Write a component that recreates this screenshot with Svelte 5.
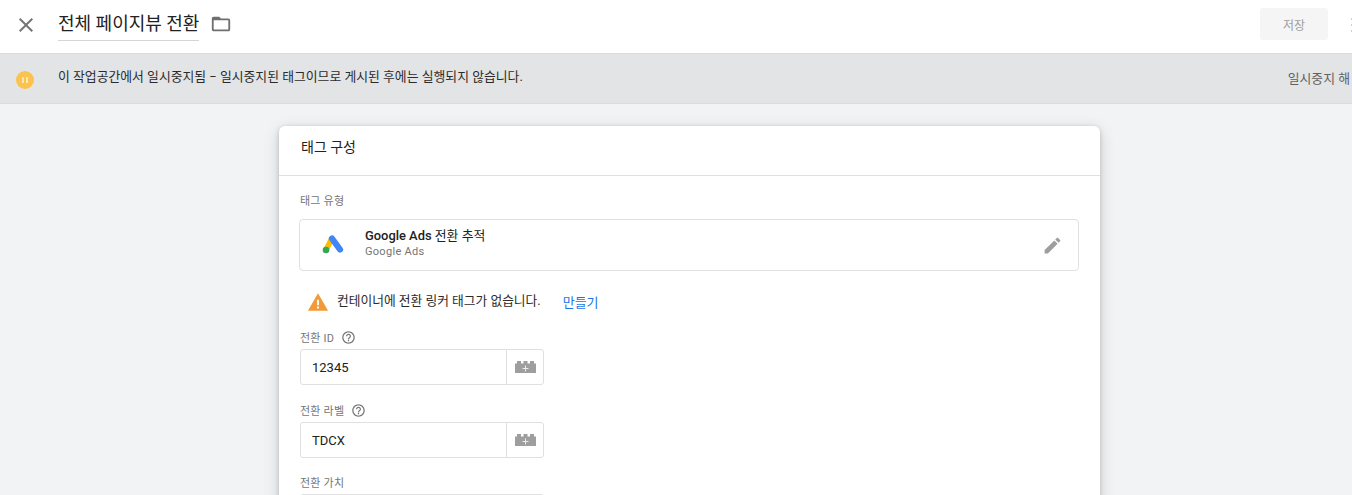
<script>
  const fields = [
    { label: '전환 ID', value: '12345', help: true },
    { label: '전환 라벨', value: 'TDCX', help: true },
    { label: '전환 가치', value: '', help: false }
  ];
</script>

<div class="page">
  <header class="topbar">
    <button class="close" aria-label="닫기">
      <svg width="24" height="24" viewBox="0 0 24 24"><path fill="#757575" d="M19 6.41 17.59 5 12 10.59 6.41 5 5 6.41 10.59 12 5 17.59 6.41 19 12 13.41 17.59 19 19 17.59 13.41 12z"/></svg>
    </button>
    <h1 class="title">전체 페이지뷰 전환</h1>
    <svg class="folder" width="22" height="22" viewBox="0 0 24 24"><path fill="#6f6f6f" d="M20 6h-8l-2-2H4c-1.100 0-2 .9-2 2v12c0 1.100.9 2 2 2h16c1.100 0 2-.9 2-2V8c0-1.100-.9-2-2-2zm0 12H4V8h16v10z"/></svg>
    <div class="spacer"></div>
    <button class="save">저장</button>
    <span class="more"><i></i><i></i><i></i></span>
  </header>

  <div class="notice">
    <span class="pause">
      <i></i><i></i>
    </span>
    <span class="notice-text">이 작업공간에서 일시중지됨 − 일시중지된 태그이므로 게시된 후에는 실행되지 않습니다.</span>
    <span class="unpause">일시중지 해</span>
  </div>

  <main class="content">
    <section class="card">
      <div class="card-title">태그 구성</div>
      <div class="card-body">
        <div class="small-label">태그 유형</div>
        <div class="type-box">
          <svg class="ads-logo" width="24" height="24" viewBox="0 0 24 24">
            <path d="M10.500 6 5.500 16" stroke="#fbbc04" stroke-width="5.500" stroke-linecap="round" fill="none"/>
            <path d="M11 5.500 19 16.500" stroke="#4285f4" stroke-width="6.200" stroke-linecap="round" fill="none"/>
            <circle cx="5" cy="17" r="3.300" fill="#34a853"/>
          </svg>
          <div class="type-text">
            <div class="type-name"><b>Google Ads</b> 전환 추적</div>
            <div class="type-sub">Google Ads</div>
          </div>
          <svg class="pencil" width="21" height="21" viewBox="0 0 24 24"><path fill="#9e9e9e" d="M3 17.250V21h3.750L17.810 9.940l-3.750-3.750L3 17.250zM20.710 7.040a1 1 0 0 0 0-1.410l-2.340-2.340a1 1 0 0 0-1.410 0l-1.830 1.830 3.750 3.750 1.830-1.830z"/></svg>
        </div>

        <div class="warning">
          <svg width="22" height="22" viewBox="0 0 24 24"><path fill="#f29a38" d="M1 21.500h22L12 2.500z"/><path fill="#fff" d="M11 9.500h2v6h-2zM11 17h2v2h-2z"/></svg>
          <span class="warning-text">컨테이너에 전환 링커 태그가 없습니다.</span>
          <a class="create" href="#create">만들기</a>
        </div>

        {#each fields as field}
          <div class="field">
            <div class="field-label">
              {field.label}
              {#if field.help}
                <svg width="15" height="15" viewBox="0 0 24 24"><path fill="#757575" d="M11 18h2v-2h-2v2zm1-16C6.480 2 2 6.480 2 12s4.480 10 10 10 10-4.480 10-10S17.520 2 12 2zm0 18c-4.410 0-8-3.590-8-8s3.590-8 8-8 8 3.590 8 8-3.590 8-8 8zm0-14c-2.210 0-4 1.790-4 4h2c0-1.100.9-2 2-2s2 .9 2 2c0 2-3 1.750-3 5h2c0-2.250 3-2.500 3-5 0-2.210-1.790-4-4-4z"/></svg>
              {/if}
            </div>
            <div class="input">
              <span class="value">{field.value}</span>
              <span class="var-btn">
                <svg width="21" height="12" viewBox="0 0 21 12"><path fill="#9e9e9e" d="M0 2.500h2V0h4v2.500h2.500V0h4v2.500H15V0h4v2.500h2V12H0z"/><path fill="#ececec" d="M10 4.500h1v2.500h2.500v1H11v2.500h-1V8H7.500V7H10z"/></svg>
              </span>
            </div>
          </div>
        {/each}
      </div>
    </section>
  </main>
</div>

<style>
  :global(body) {
    margin: 0;
    background: #f1f3f4;
    overflow: hidden;
  }

  .page {
    height: 495px;
    overflow: hidden;
    font-family: Roboto, "Noto Sans CJK KR", sans-serif;
    color: #212121;
  }

  .topbar {
    height: 53px;
    background: #fff;
    border-bottom: 1px solid #dadce0;
    display: flex;
    align-items: flex-start;
    padding-left: 14px;
  }

  .close {
    width: 24px;
    height: 24px;
    margin-top: 13px;
    padding: 0;
    border: 0;
    background: none;
  }

  .title {
    margin: 8px 0 0 20px;
    height: 32px;
    line-height: 31px;
    font-size: 18px;
    font-weight: 400;
    border-bottom: 1px solid #d5d5d5;
    white-space: nowrap;
  }

  .folder {
    margin: 13px 0 0 11px;
  }

  .spacer {
    flex: 1;
  }

  .save {
    width: 68px;
    height: 32px;
    margin-top: 8px;
    border: 0;
    border-radius: 3px;
    background: #f5f5f5;
    color: #9e9e9e;
    font: 12px Roboto, "Noto Sans CJK KR", sans-serif;
  }

  .more {
    width: 24px;
    box-sizing: border-box;
    padding: 18px 0 0 23px;
    display: flex;
    flex-direction: column;
    gap: 4px;
  }

  .more i {
    width: 1px;
    height: 2px;
    background: #cfcfcf;
  }

  .notice {
    height: 49px;
    background: #e3e4e6;
    border-bottom: 1px solid #dadce0;
    display: flex;
    align-items: flex-start;
    padding-left: 16px;
    overflow: hidden;
    white-space: nowrap;
  }

  .pause {
    width: 18px;
    height: 18px;
    margin-top: 17px;
    border-radius: 50%;
    background: #fbc34d;
    display: flex;
    align-items: center;
    justify-content: center;
    gap: 2px;
    flex: none;
  }

  .pause i {
    width: 2px;
    height: 6px;
    background: #fde7b5;
  }

  .notice-text {
    margin: 14px 0 0 24px;
    font-size: 12.850px;
    line-height: 18px;
    color: #2b2b2b;
    flex: 1;
  }

  .unpause {
    margin-top: 16px;
    flex: none;
    font-size: 12.850px;
    line-height: 18px;
    color: #616161;
    padding-right: 2px;
  }

  .content {
    display: flex;
    padding: 22px 0 0 279px;
  }

  .card {
    width: 821px;
    background: #fff;
    border-radius: 6px 6px 0 0;
    box-shadow: 0 1px 4px rgba(0, 0, 0, 0.16), 0 4px 16px rgba(0, 0, 0, 0.16);
    flex: none;
  }

  .card-title {
    height: 49px;
    line-height: 42px;
    padding-left: 22px;
    font-size: 14px;
    border-bottom: 1px solid #e0e0e0;
  }

  .card-body {
    padding: 16px 21px 0 20px;
  }

  .small-label {
    padding: 1px 0 0 1px;
    height: 17px;
    font-size: 11px;
    line-height: 18px;
    color: #757575;
    letter-spacing: 0.2px;
  }

  .type-box {
    margin-top: 9px;
    height: 50px;
    border: 1px solid #e0e0e0;
    border-radius: 4px;
    display: flex;
    align-items: center;
    padding: 0 15px 0 21px;
  }

  .ads-logo {
    flex: none;
  }

  .type-text {
    margin: -4px 0 0 20px;
    flex: 1;
  }

  .type-name {
    font-size: 12.900px;
    line-height: 16px;
    color: #212121;
  }

  .type-name b {
    font-weight: 500;
  }

  .type-sub {
    font-size: 11px;
    line-height: 15px;
    color: #757575;
    letter-spacing: 0.3px;
  }

  .warning {
    display: flex;
    align-items: flex-start;
    margin: 20px 0 12px 8px;
    height: 26px;
  }

  .warning-text {
    margin-left: 8px;
    font-size: 12.750px;
    line-height: 20px;
    color: #2b2b2b;
  }

  .create {
    margin: 2px 0 0 22px;
    font-size: 13px;
    line-height: 20px;
    color: #1a73e8;
    text-decoration: none;
  }

  .field {
    margin-bottom: 17px;
  }

  .field:last-child {
    margin-top: -1px;
  }

  .field-label {
    display: flex;
    align-items: center;
    gap: 7px;
    height: 16px;
    padding-left: 1px;
    font-size: 11px;
    color: #757575;
    letter-spacing: 0.2px;
  }

  .input {
    width: 242px;
    height: 34px;
    margin: 4px 0 0 1px;
    border: 1px solid #e0e0e0;
    border-radius: 3px;
    display: flex;
    align-items: center;
  }

  .value {
    flex: 1;
    padding-left: 11px;
    font-size: 13px;
    color: #212121;
  }

  .var-btn {
    width: 36px;
    height: 100%;
    border-left: 1px solid #e0e0e0;
    display: flex;
    align-items: center;
    justify-content: center;
  }
</style>
